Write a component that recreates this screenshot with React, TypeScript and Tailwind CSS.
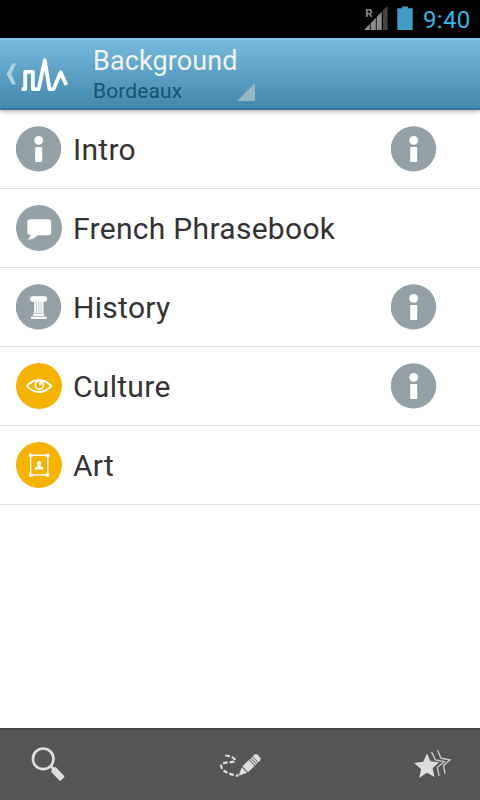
import React from "react";

type Kind = "info" | "phrase" | "history" | "culture" | "art";

function Info() {
  return (
    <svg className="block h-[46px] w-[46px]" viewBox="0 0 46 46">
      <circle cx="22.5" cy="22.9" r="22.7" fill="#93a1a7" />
      <circle cx="22.7" cy="14.4" r="4.4" fill="#fff" />
      <rect x="19.2" y="21" width="7" height="15" rx="0.8" fill="#fff" />
    </svg>
  );
}

function Phrase() {
  return (
    <svg className="block h-[46px] w-[46px]" viewBox="0 0 46 46">
      <circle cx="23" cy="23" r="23" fill="#93a1a7" />
      <path
        d="M14.2 14.2H32.3Q35.2 14.2 35.2 17V27.5Q35.2 30.2 32.3 30.2H21.5Q18 34.3 12 34.8Q14.2 32.5 14.4 30Q11.4 29.5 11.4 27V17Q11.4 14.2 14.2 14.2Z"
        fill="#fff"
      />
    </svg>
  );
}

function Pillar() {
  return (
    <svg className="block h-[46px] w-[46px]" viewBox="0 0 46 46">
      <circle cx="22.5" cy="22.9" r="22.7" fill="#93a1a7" />
      <g fill="#fff">
        <path d="M16.3 12.2H28.7Q31.3 12.4 31.3 15Q31 17.8 28.4 17.8H16.6Q14 17.6 13.8 15Q13.8 12.5 16.3 12.2Z" />
        <path d="M18.2 15h2.2v14.6h-2.2zM21 15h1.6v14.6H21zM23.2 15h1.6v14.6h-1.6zM25.4 15h2v14.6h-2z" />
        <rect x="17" y="29.8" width="11.3" height="2.2" />
        <rect x="15" y="32.7" width="15.6" height="2.2" />
      </g>
    </svg>
  );
}

function Eye() {
  return (
    <svg className="block h-[46px] w-[46px]" viewBox="0 0 46 46" fill="none" stroke="#fff">
      <circle cx="23" cy="23" r="23" fill="#f5b200" stroke="none" />
      <path d="M10.8 23Q16.5 17 23 17T35.4 23Q29.5 29 23 29T10.8 23Z" strokeWidth="1.8" />
      <circle cx="23.4" cy="22" r="4.1" strokeWidth="1.7" />
      <circle cx="24.6" cy="20.8" r="1.7" fill="#fff" stroke="none" />
    </svg>
  );
}

function Frame() {
  return (
    <svg className="block h-[46px] w-[46px]" viewBox="0 0 46 46">
      <circle cx="23" cy="23" r="23" fill="#f5b200" />
      <rect x="14.6" y="13.3" width="17.2" height="19.6" fill="none" stroke="#fff" strokeWidth="1.4" />
      <g fill="#fff">
        <circle cx="14.8" cy="13.5" r="2.1" />
        <circle cx="31.6" cy="13.5" r="2.1" />
        <circle cx="14.8" cy="33" r="2.1" />
        <circle cx="31.6" cy="33" r="2.1" />
        <path d="M21 21.4Q21 19 23.1 19T25.2 21.4Q25.2 23.2 24.4 24.2Q27.6 24.8 27.6 27.4H18.4Q18.4 24.8 21.8 24.2Q21 23.2 21 21.4Z" />
      </g>
    </svg>
  );
}

function RowIcon({ kind }: { kind: Kind }) {
  if (kind === "info") return <Info />;
  if (kind === "phrase") return <Phrase />;
  if (kind === "history") return <Pillar />;
  if (kind === "culture") return <Eye />;
  return <Frame />;
}

const rows: { kind: Kind; label: string; info: boolean }[] = [
  { kind: "info", label: "Intro", info: true },
  { kind: "phrase", label: "French Phrasebook", info: false },
  { kind: "history", label: "History", info: true },
  { kind: "culture", label: "Culture", info: true },
  { kind: "art", label: "Art", info: false },
];

function StatusBar() {
  return (
    <div className="flex h-[38px] shrink-0 items-start justify-end bg-black pr-[10px]">
      <svg className="h-[38px] w-[58px]" viewBox="0 0 58 38">
        <path d="M2 30L20 11.5V30Z" fill="#8c8c8c" />
        <path d="M20.6 10L25.6 6.5V30H20.6Z" fill="#444" />
        <path d="M8.3 22V30M14.3 16V30M20.2 10V30" stroke="#000" strokeWidth="0.8" />
        <text x="3.2" y="17" fill="#8c8c8c" fontSize="11.5" fontWeight="700" fontFamily="Roboto, sans-serif">
          R
        </text>
        <path d="M35.3 8.3H40V6.5H46V8.3H50.7V30H35.3Z" fill="#409dc4" />
      </svg>
      <div className="mt-[5px] ml-[3px] w-[47px] whitespace-nowrap text-[24px] leading-[30px] tracking-[0.3px] text-[#33b5e5]">
        9:40
      </div>
    </div>
  );
}

function Header() {
  return (
    <div className="z-10 flex h-[72px] shrink-0 border-t-2 border-b-2 border-t-[#85c5ea] border-b-[#367796] bg-linear-to-b from-[#76b9de] to-[#4189ac] shadow-[0_1px_5px_rgba(0,0,0,0.4)]">
      <svg className="h-[68px] w-[93px] shrink-0" viewBox="0 40 93 68" fill="none">
        <path d="M12.1 63.4H16.2L11.3 74L16.2 84.6H12.1L6.6 74Z" fill="#b1d0df" />
        <path
          d="M21.6 89.1H25.2V71.8H32.9V89.1H38.6L44.8 60.3L49.5 89.1H53.6L60.7 72.3L66.3 85"
          stroke="#fff"
          strokeWidth="3.8"
          strokeLinejoin="round"
        />
      </svg>
      <div className="flex">
        <div className="w-[144px] pt-[4px] whitespace-nowrap">
          <div className="text-[27px] leading-[34px] tracking-[0.1px] text-[#f3f3f3]">Background</div>
          <div className="text-[21px] leading-[26px] tracking-[0.1px] text-[#155373]">Bordeaux</div>
        </div>
        <svg className="mt-[43px] h-[18px] w-[18px]" viewBox="0 0 18 18">
          <path d="M0 18L18 0V18Z" fill="#99b6c3" />
        </svg>
      </div>
    </div>
  );
}

function Toolbar() {
  return (
    <div className="flex h-[72px] shrink-0 justify-between border-t-2 border-[#444] bg-[#555]">
      <svg className="h-[70px] w-[80px]" viewBox="0 730 80 70" fill="none">
        <circle cx="43.2" cy="758.8" r="10.3" stroke="#dedede" strokeWidth="2.7" />
        <path d="M50.5 766L54.5 770" stroke="#dedede" strokeWidth="3" />
        <rect x="0" y="-3.3" width="14" height="6.6" rx="1.5" fill="#dedede" transform="translate(53 768.8) rotate(47)" />
      </svg>
      <svg className="h-[70px] w-[80px]" viewBox="200 730 80 70" fill="none">
        <path
          d="M225.2 755.5C230 756 236 758 235 761C233 763 224 761 221.3 765C220 770 229 775 238.5 775.6"
          stroke="#dedede"
          strokeWidth="2.2"
          strokeDasharray="4.6 2"
        />
        <g transform="translate(238.5 775.7) rotate(-44)" fill="#dedede">
          <path d="M0 0L8.3 -3.9V3.9Z" />
          <path d="M9.3 -4.1H18.3V4.1H9.3Z" />
          <path d="M19.1 -4.1H20.6V4.1H19.1ZM21.4 -4.1H22.9V4.1H21.4Z" />
          <path d="M23.7 -4.1H25.5Q28.3 -4.1 28.3 -1.2V1.2Q28.3 4.1 25.5 4.1H23.7Z" />
        </g>
      </svg>
      <svg className="h-[70px] w-[80px]" viewBox="400 730 80 70" fill="none">
        <path
          d="M431.6 752L435.4 760L444.4 761.6L437.4 767.3L439 775.8M437.6 750.3L441 758.2L450 760L443.6 765.5L445 773.7"
          stroke="#d0d0d0"
          strokeWidth="1.3"
        />
        <path
          d="M427 753.5L430.4 761.3L439 762.3L432.6 768.2L434.5 776.9L426.8 772.8L419.2 778L421.1 769L414 763L423.3 761.7Z"
          fill="#dedede"
        />
      </svg>
    </div>
  );
}

export default function App() {
  return (
    <div className="flex h-[800px] w-[480px] flex-col overflow-hidden bg-white font-[Roboto,sans-serif]">
      <StatusBar />
      <Header />
      <div className="grow">
        {rows.map((row) => (
          <div key={row.label} className="flex h-[79px] items-start border-b border-[#e0e0e0] pt-[16px] pl-[16px]">
            <RowIcon kind={row.kind} />
            <div className="ml-[11px] w-[318px] whitespace-nowrap text-[30px] leading-[47px] tracking-[0.3px] text-[#333]">
              {row.label}
            </div>
            {row.info && <Info />}
          </div>
        ))}
      </div>
      <Toolbar />
    </div>
  );
}
